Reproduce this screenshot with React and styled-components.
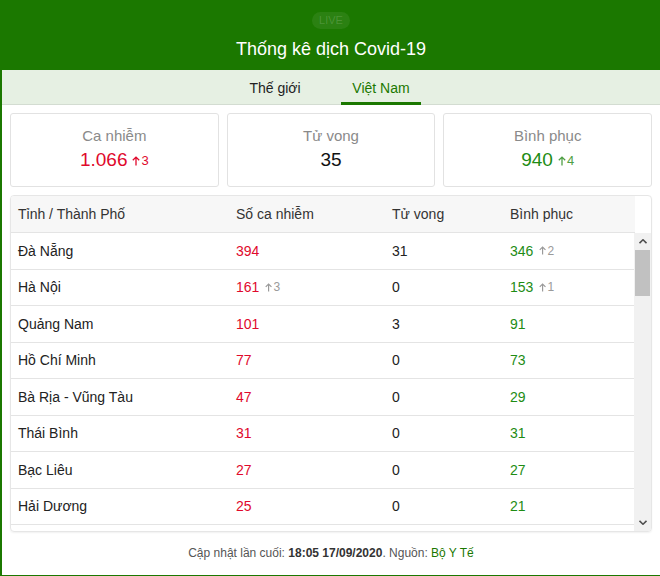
import React from 'react';
import styled, { createGlobalStyle } from 'styled-components';

const GlobalStyle = createGlobalStyle`
  html, body {
    margin: 0;
    padding: 0;
    background: #fff;
    font-family: "Liberation Sans", Arial, sans-serif;
  }
`;

const Frame = styled.div`
  width: 660px;
  height: 576px;
  box-sizing: border-box;
  border-left: 2px solid #1b7800;
  border-bottom: 1px solid #1b7800;
  display: flex;
  flex-direction: column;
  overflow: hidden;
`;

const Header = styled.div`
  background: #1b7800;
  height: 70px;
  display: flex;
  flex-direction: column;
  align-items: center;
  padding-top: 12px;
  box-sizing: border-box;
`;

const LiveBadge = styled.div`
  background: rgba(255, 255, 255, 0.07);
  color: rgba(255, 255, 255, 0.16);
  font-size: 11px;
  line-height: 17px;
  height: 17px;
  padding: 0 7px;
  border-radius: 9px;
`;

const Title = styled.h1`
  margin: 8px 0 0;
  color: #fff;
  font-size: 18px;
  font-weight: 400;
  line-height: 24px;
`;

const TabBar = styled.div`
  background: #e6f0e3;
  border-bottom: 1px solid #d3dcd1;
  height: 35px;
  box-sizing: border-box;
  display: flex;
  justify-content: center;
  gap: 26px;
  padding-right: 6px;
`;

const Tab = styled.div`
  width: 80px;
  text-align: center;
  font-size: 14px;
  color: ${(p) => (p.$active ? '#1b7800' : '#222')};
  border-bottom: 3px solid ${(p) => (p.$active ? '#1b7800' : 'transparent')};
  box-sizing: border-box;
  height: 35px;
  margin-bottom: -1px;
  padding-top: 3px;
  line-height: 31px;
`;

const Body = styled.div`
  padding: 8px 8px 0;
  display: flex;
  flex-direction: column;
  gap: 8px;
`;

const Cards = styled.div`
  display: grid;
  grid-template-columns: repeat(3, 1fr);
  gap: 8px;
`;

const Card = styled.div`
  height: 74px;
  border: 1px solid #e2e2e2;
  border-radius: 3px;
  box-sizing: border-box;
  display: flex;
  flex-direction: column;
  align-items: center;
  padding-top: 13px;
`;

const CardLabel = styled.div`
  color: #8a8a8a;
  font-size: 15px;
  line-height: 18px;
`;

const CardValue = styled.div`
  margin-top: 4px;
  font-size: 19px;
  line-height: 22px;
  color: ${(p) => p.$color};
  display: flex;
  align-items: baseline;
  gap: 5px;
`;

const Delta = styled.span`
  font-size: ${(p) => p.$size || 13}px;
  color: ${(p) => p.$color};
  display: inline-flex;
  align-items: center;
  gap: 1px;
`;

const TableBox = styled.div`
  border: 1px solid #e6e6e6;
  border-radius: 4px;
  box-shadow: 0 1px 2px rgba(0, 0, 0, 0.06);
  height: 337px;
  box-sizing: border-box;
  display: flex;
  flex-direction: column;
  overflow: hidden;
`;

const Columns = styled.div`
  display: grid;
  grid-template-columns: 218px 156px 118px 132px;
  align-items: center;
`;

const HeadRow = styled(Columns)`
  width: 624px;
  height: 37px;
  background: #f7f7f7;
  border-bottom: 1px solid #e4e4e4;
  box-sizing: border-box;
  font-size: 14px;
  color: #333;
`;

const Cell = styled.div`
  padding-left: 7px;
  display: flex;
  align-items: center;
  gap: 6px;
  color: ${(p) => p.$color || '#222'};
`;

const ScrollArea = styled.div`
  flex: 1;
  display: flex;
  min-height: 0;
`;

const Rows = styled.div`
  width: 624px;
  overflow: hidden;
`;

const Row = styled(Columns)`
  height: 36.5px;
  border-bottom: 1px solid #e4e4e4;
  box-sizing: border-box;
  font-size: 14px;
`;

const Scrollbar = styled.div`
  width: 17px;
  background: #f1f1f1;
  display: flex;
  flex-direction: column;
`;

const ScrollButton = styled.div`
  height: 17px;
  display: flex;
  align-items: center;
  justify-content: center;
`;

const Track = styled.div`
  flex: 1;
`;

const Thumb = styled.div`
  margin: 0 1px;
  height: 46px;
  background: #c1c1c1;
`;

const Footer = styled.div`
  text-align: center;
  font-size: 12px;
  color: #555;
  padding-top: 6px;

  b {
    color: #333;
  }
`;

const Source = styled.span`
  color: #1b7800;
`;

const UpArrow = ({ size = 10 }) => (
  <svg width={size * 0.8} height={size} viewBox="0 0 8 10" fill="none" stroke="currentColor" strokeWidth="1.3">
    <path d="M4 9.5V1.2M0.8 4.3L4 1.1L7.2 4.3" />
  </svg>
);

const Chevron = ({ down }) => (
  <svg width="8" height="5" viewBox="0 0 8 5">
    <path d={down ? 'M0.5 0.8L4 4.2L7.5 0.8' : 'M0.5 4.2L4 0.8L7.5 4.2'} stroke="#505050" strokeWidth="1.6" fill="none" />
  </svg>
);

const RED = '#e0092c';
const GREEN = '#1e8c14';

const rows = [
  ['Đà Nẵng', 394, null, 31, 346, 2],
  ['Hà Nội', 161, 3, 0, 153, 1],
  ['Quảng Nam', 101, null, 3, 91, null],
  ['Hồ Chí Minh', 77, null, 0, 73, null],
  ['Bà Rịa - Vũng Tàu', 47, null, 0, 29, null],
  ['Thái Bình', 31, null, 0, 31, null],
  ['Bạc Liêu', 27, null, 0, 27, null],
  ['Hải Dương', 25, null, 0, 21, null],
];

const Count = ({ value, delta, color }) => (
  <Cell $color={color}>
    {value}
    {delta != null && (
      <Delta $size={12} $color="#9a9a9a">
        <UpArrow size={9} />
        {delta}
      </Delta>
    )}
  </Cell>
);

export default function App() {
  return (
    <>
      <GlobalStyle />
      <Frame>
        <Header>
          <LiveBadge>LIVE</LiveBadge>
          <Title>Thống kê dịch Covid-19</Title>
        </Header>
        <TabBar>
          <Tab>Thế giới</Tab>
          <Tab $active>Việt Nam</Tab>
        </TabBar>
        <Body>
          <Cards>
            <Card>
              <CardLabel>Ca nhiễm</CardLabel>
              <CardValue $color={RED}>
                1.066
                <Delta $color={RED}>
                  <UpArrow />3
                </Delta>
              </CardValue>
            </Card>
            <Card>
              <CardLabel>Tử vong</CardLabel>
              <CardValue $color="#111">35</CardValue>
            </Card>
            <Card>
              <CardLabel>Bình phục</CardLabel>
              <CardValue $color={GREEN}>
                940
                <Delta $color="#4f9f45">
                  <UpArrow />4
                </Delta>
              </CardValue>
            </Card>
          </Cards>
          <TableBox>
            <HeadRow>
              <Cell $color="#333">Tỉnh / Thành Phố</Cell>
              <Cell $color="#333">Số ca nhiễm</Cell>
              <Cell $color="#333">Tử vong</Cell>
              <Cell $color="#333">Bình phục</Cell>
            </HeadRow>
            <ScrollArea>
              <Rows>
                {rows.map(([name, cases, dCases, deaths, rec, dRec]) => (
                  <Row key={name}>
                    <Cell>{name}</Cell>
                    <Count value={cases} delta={dCases} color={RED} />
                    <Cell>{deaths}</Cell>
                    <Count value={rec} delta={dRec} color={GREEN} />
                  </Row>
                ))}
              </Rows>
              <Scrollbar>
                <ScrollButton>
                  <Chevron />
                </ScrollButton>
                <Track>
                  <Thumb />
                </Track>
                <ScrollButton>
                  <Chevron down />
                </ScrollButton>
              </Scrollbar>
            </ScrollArea>
          </TableBox>
          <Footer>
            Cập nhật lần cuối: <b>18:05 17/09/2020</b>. Nguồn: <Source>Bộ Y Tế</Source>
          </Footer>
        </Body>
      </Frame>
    </>
  );
}
